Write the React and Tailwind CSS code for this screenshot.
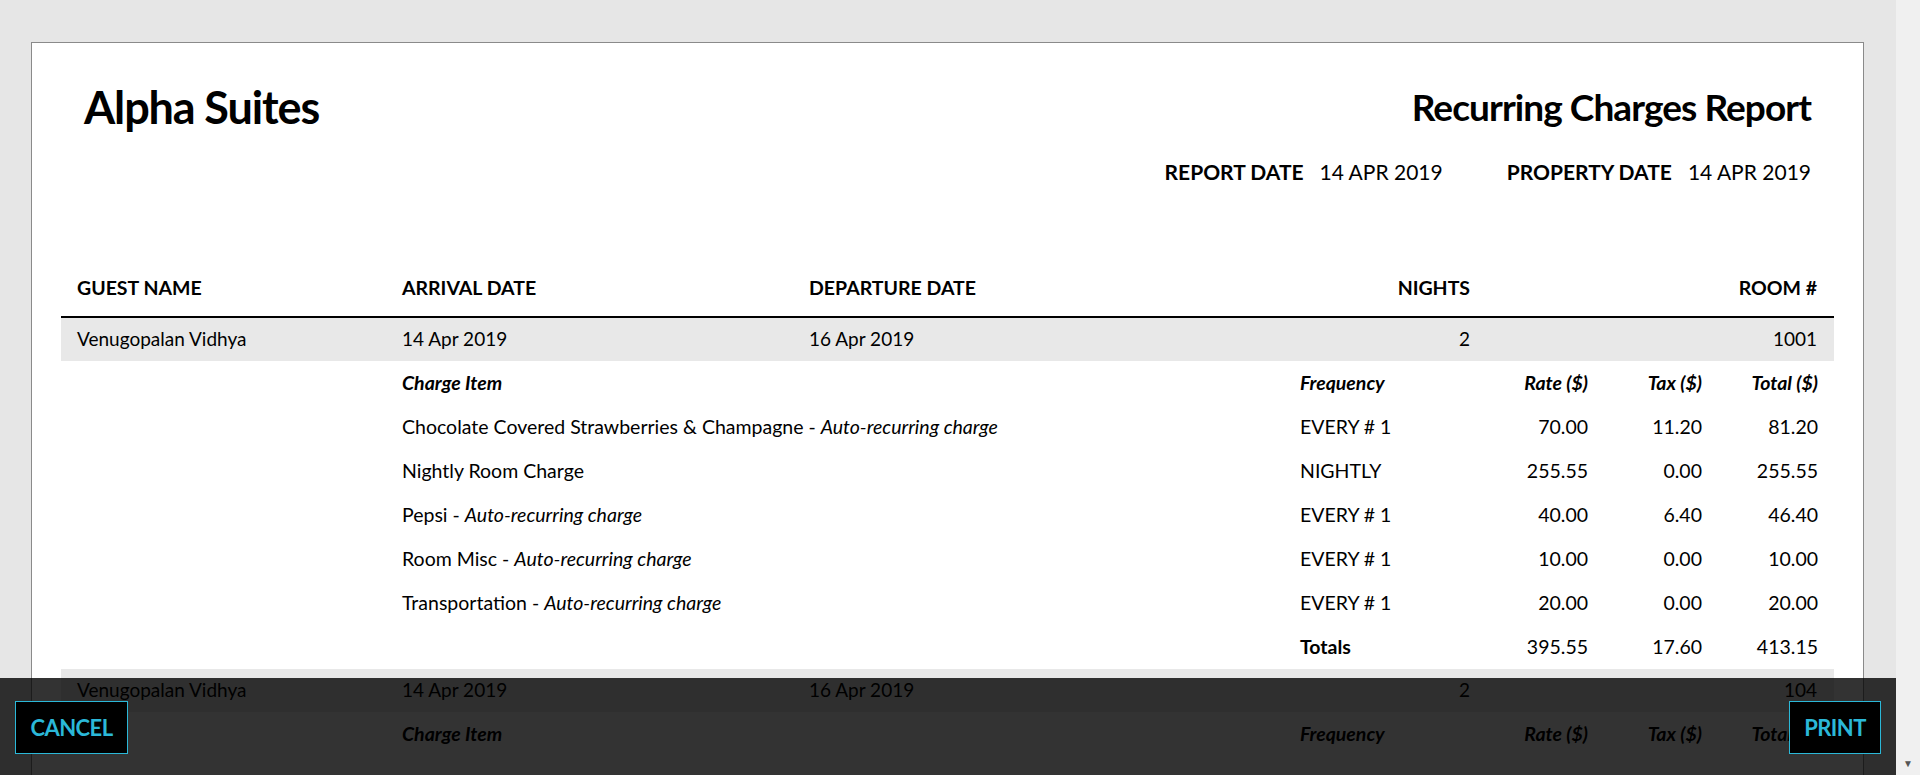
export default function App() {
  const charges = [
    ["Chocolate Covered Strawberries & Champagne", true, "EVERY # 1", "70.00", "11.20", "81.20"],
    ["Nightly Room Charge", false, "NIGHTLY", "255.55", "0.00", "255.55"],
    ["Pepsi", true, "EVERY # 1", "40.00", "6.40", "46.40"],
    ["Room Misc", true, "EVERY # 1", "10.00", "0.00", "10.00"],
    ["Transportation", true, "EVERY # 1", "20.00", "0.00", "20.00"],
  ];
  const Guest = ({ room }) => (
    <div className="flex items-center h-[43px] bg-[#e8e8e8] pl-4 pr-[17px] text-[19px]">
      <div className="w-[325px]">Venugopalan Vidhya</div>
      <div className="w-[407px]">14 Apr 2019</div>
      <div className="w-[400px]">16 Apr 2019</div>
      <div className="w-[261px] text-right">2</div>
      <div className="flex-1 text-right">{room}</div>
    </div>
  );
  const Row = ({ a, b, c, d, e, cls = "" }) => (
    <div className={"flex items-center h-[44px] pl-[341px] pr-4 text-[19.5px] " + cls}>
      <div className="flex-1 whitespace-nowrap">{a}</div>
      <div className="w-[150px]">{b}</div>
      <div className="w-[138px] text-right">{c}</div>
      <div className="w-[114px] text-right">{d}</div>
      <div className="w-[116px] text-right">{e}</div>
    </div>
  );
  return (
    <div className="h-[775px] w-[1920px] flex overflow-hidden bg-[#e6e6e6] text-black relative" style={{ fontFamily: "Lato, 'Noto Sans', sans-serif" }}>
      <div className="flex-1 pt-[42px] pl-[31px] pr-[32px]">
        <div className="bg-white border border-[#8a8a8a] pt-[40px] px-[29px] h-[900px]">
          <div className="flex justify-between items-start px-[23px]">
            <div className="text-[45px] font-bold leading-none mt-[2px] tracking-tight">Alpha Suites</div>
            <div className="flex flex-col items-end">
              <div className="text-[37px] font-bold leading-none mt-[5px] tracking-tight">Recurring Charges Report</div>
              <div className="flex gap-[64px] mt-[36px] text-[21px] leading-none">
                <div><span className="font-bold">REPORT DATE</span><span className="ml-4">14 APR 2019</span></div>
                <div><span className="font-bold">PROPERTY DATE</span><span className="ml-4">14 APR 2019</span></div>
              </div>
            </div>
          </div>
          <div className="mt-[88px]">
            <div className="flex items-end h-[48px] pb-[14px] pl-4 pr-[17px] text-[19.5px] font-bold border-b-2 border-black">
              <div className="w-[325px]">GUEST NAME</div>
              <div className="w-[407px]">ARRIVAL DATE</div>
              <div className="w-[400px]">DEPARTURE DATE</div>
              <div className="w-[261px] text-right">NIGHTS</div>
              <div className="flex-1 text-right">ROOM #</div>
            </div>
            <Guest room="1001" />
            <Row cls="italic font-bold" a="Charge Item" b="Frequency" c="Rate ($)" d="Tax ($)" e="Total ($)" />
            {charges.map(([n, auto, f, r, t, tot]) => (
              <Row key={n} a={<span>{n}{auto && <> - <i>Auto-recurring charge</i></>}</span>} b={f} c={r} d={t} e={tot} />
            ))}
            <Row a="" b={<b>Totals</b>} c="395.55" d="17.60" e="413.15" />
            <Guest room="104" />
            <Row cls="italic font-bold" a="Charge Item" b="Frequency" c="Rate ($)" d="Tax ($)" e="Total ($)" />
          </div>
        </div>
      </div>
      <div className="w-[24px] bg-[#f0f0f0] flex flex-col justify-end items-center pb-1 text-[10px] text-[#555]">▼</div>
      <div className="absolute left-0 right-[24px] bottom-0 h-[97px] bg-black/80 flex items-center justify-between px-[15px] pt-[1px]">
        <button className="h-[53px] w-[113px] bg-black border border-[#2bb8d8] text-[#2bb8d8] font-bold text-[22px] tracking-tight">CANCEL</button>
        <button className="h-[53px] w-[92px] bg-black border border-[#2bb8d8] text-[#2bb8d8] font-bold text-[22px] tracking-tight">PRINT</button>
      </div>
    </div>
  );
}
